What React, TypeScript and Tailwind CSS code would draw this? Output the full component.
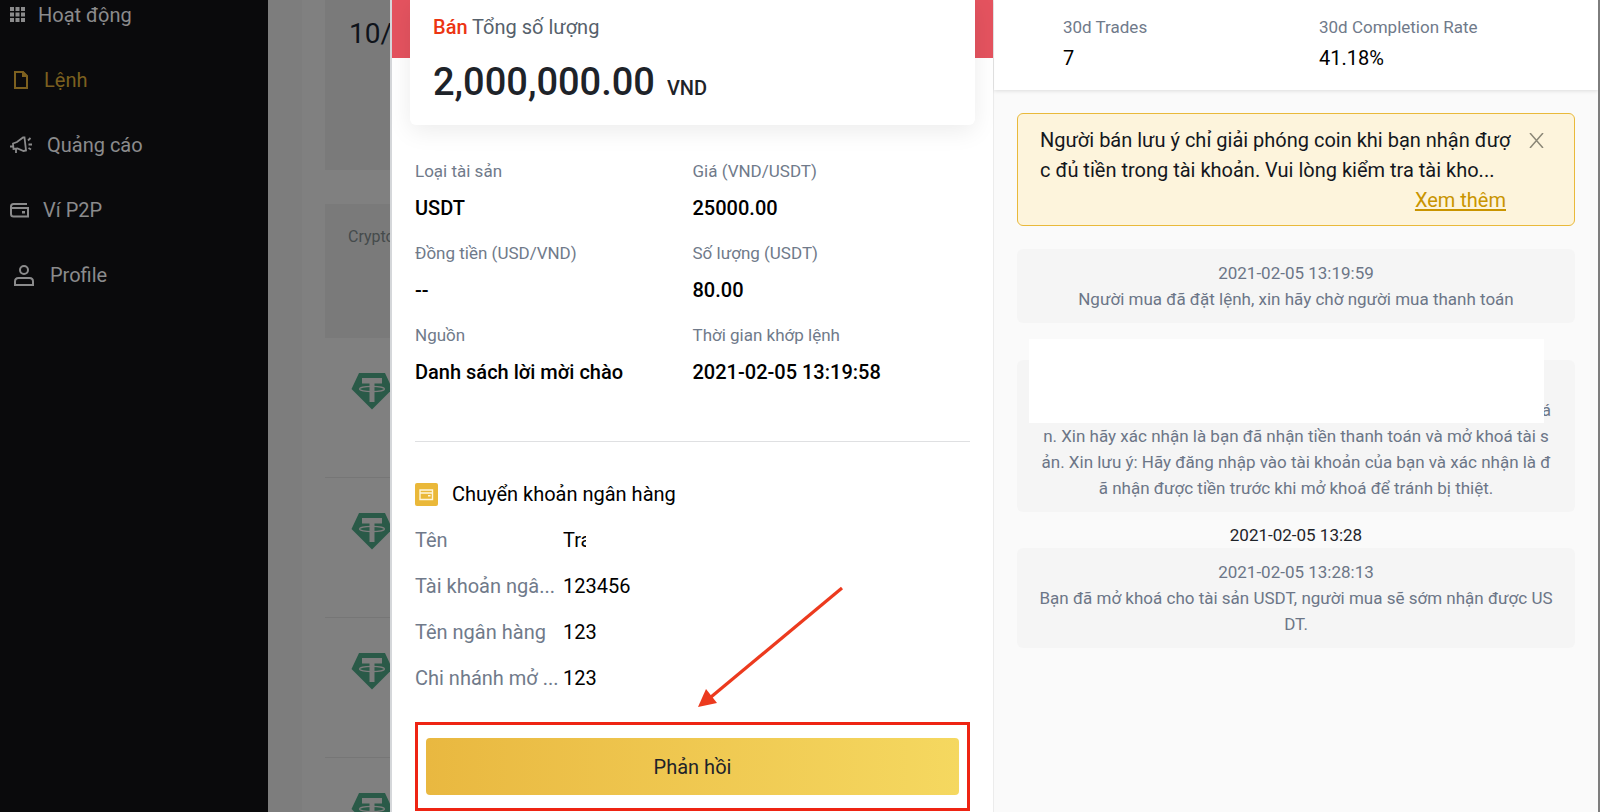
import type { ReactNode } from "react";

type NavItem = {
  label: string;
  icon: ReactNode;
  className: string;
};

const navItems: NavItem[] = [
  { label: "Hoạt động", icon: <GridIcon />, className: "gap-3" },
  { label: "Lệnh", icon: <FileIcon />, className: "gap-4 pl-1 text-[#7c601f]" },
  { label: "Quảng cáo", icon: <MegaphoneIcon />, className: "gap-[14px]" },
  { label: "Ví P2P", icon: <WalletIcon />, className: "gap-[14px]" },
  { label: "Profile", icon: <UserIcon />, className: "gap-4 pl-1" },
];

const details = [
  { label: "Loại tài sản", value: "USDT" },
  { label: "Giá (VND/USDT)", value: "25000.00" },
  { label: "Đồng tiền (USD/VND)", value: "--" },
  { label: "Số lượng (USDT)", value: "80.00" },
  { label: "Nguồn", value: "Danh sách lời mời chào" },
  { label: "Thời gian khớp lệnh", value: "2021-02-05 13:19:58" },
];

const bankRows = [
  { label: "Tài khoản ngâ...", value: "123456" },
  { label: "Tên ngân hàng", value: "123" },
  { label: "Chi nhánh mở ...", value: "123" },
];

function GridIcon() {
  return (
    <svg width="16" height="16" viewBox="0 0 16 16" fill="currentColor">
      {[0, 5.5, 11].map((y) => [0, 5.5, 11].map((x) => <rect key={`${x}-${y}`} x={x} y={y} width="4" height="4" />))}
    </svg>
  );
}

function FileIcon() {
  return (
    <svg width="14" height="20" viewBox="0 0 14 20" fill="none" stroke="currentColor" strokeWidth="2">
      <path d="M1 2h8l4 4v12H1z" />
      <path d="M8 1v6h5V5L9 1z" fill="currentColor" stroke="none" />
    </svg>
  );
}

function MegaphoneIcon() {
  return (
    <svg width="23" height="18" viewBox="0 0 23 18" fill="none" stroke="currentColor" strokeWidth="1.8">
      <path d="M3 7.5 7 6l6-4.5h1.500L16 14.500l-2.500.5-6-2.500-4 .5z" />
      <path d="M0 10.500h3M6 12.500V17M18 4.500l2.500-2.500M18.500 8.500H22M18.500 12l2.500 1.500" />
    </svg>
  );
}

function WalletIcon() {
  return (
    <svg width="19" height="15" viewBox="0 0 19 15" fill="none" stroke="currentColor" strokeWidth="2">
      <path d="M17 1H3.500C2 1 1 2 1 3.500v7.500C1 12.500 2 13.500 3.500 13.500H18V5H1.500" />
      <rect x="12" y="8" width="3" height="2.500" fill="currentColor" stroke="none" />
    </svg>
  );
}

function UserIcon() {
  return (
    <svg width="20" height="21" viewBox="0 0 20 21" fill="none" stroke="currentColor" strokeWidth="2">
      <circle cx="10" cy="5" r="4" />
      <path d="M1 20v-3.500C1 14.500 2.500 13 4.500 13h11c2 0 3.500 1.500 3.500 3.500V20z" />
    </svg>
  );
}

function TetherIcon() {
  return (
    <svg width="42" height="37" viewBox="0 0 42 37" className="shrink-0">
      <path d="M8 0h26l7.500 16L21 36.500.500 16z" fill="#2a5a48" />
      <path d="M11 5h20v5.500h-7.500V29h-5V10.500H11z" fill="#7d7d7d" />
      <ellipse cx="21" cy="16" rx="12.500" ry="2.600" fill="none" stroke="#7d7d7d" strokeWidth="1.200" />
    </svg>
  );
}

function CardIcon() {
  return (
    <svg width="23" height="23" viewBox="0 0 23 23" className="shrink-0">
      <rect width="23" height="23" rx="2" fill="#eab839" />
      <path d="M5 7h12.500v9.500H5zM5 10h12.500" fill="none" stroke="#fff6dc" strokeWidth="1.400" />
      <rect x="13" y="12" width="2.500" height="1.500" fill="#fff6dc" />
    </svg>
  );
}

function Sidebar() {
  return (
    <nav className="w-[268px] shrink-0 bg-[#0a0a0c] text-[#8b8b8c]">
      <ul className="flex flex-col gap-[35px] pl-[10px]">
        {navItems.map((item) => (
          <li key={item.label}>
            <a href="#" className={`flex items-center text-xl leading-[30px] ${item.className}`}>
              {item.icon}
              {item.label}
            </a>
          </li>
        ))}
      </ul>
    </nav>
  );
}

// Dimmed order list that stays visible behind the drawer
function OrderList() {
  return (
    <div className="flex w-[122px] shrink-0 overflow-hidden bg-[#808080]">
      <div className="w-[34px] shrink-0 bg-[#7d7d7d]" />
      <div className="ml-[23px] w-[300px] shrink-0">
        <div className="h-[170px] bg-[#7a7a7a] pt-[14px] pl-6 text-[28px] leading-10 text-[#0f131a]">10/</div>
        <div className="mt-[34px] h-[134px] bg-[#7a7a7a] pt-5 pl-[23px] text-base leading-[26px] text-[#454b4c]">Crypto</div>
        {[0, 1, 2, 3].map((row) => (
          <div key={row} className="h-[140px] border-b border-[#767676] pt-[35px] pl-[26px]">
            <TetherIcon />
          </div>
        ))}
      </div>
    </div>
  );
}

function OrderPanel() {
  return (
    <section className="relative bg-white">
      <div className="absolute inset-x-0 top-0 h-[58px] bg-[#e4535f]" />
      <div className="relative mx-[18px] h-[125px] rounded-b-md bg-white px-[23px] pt-3 shadow-[0_6px_24px_rgba(0,0,0,0.08)]">
        <p className="text-xl leading-[30px] text-[#56616b]">
          <span className="font-medium text-[#ec3512]">Bán</span> Tổng số lượng
        </p>
        <p className="mt-3 leading-[56px] font-medium text-[#1e2329]">
          <span className="text-[38px]">2,000,000.00</span> <span className="ml-2 text-xl">VND</span>
        </p>
      </div>

      <div className="px-[23px] pt-[33px]">
        <dl className="grid grid-cols-2 gap-y-4 border-b border-[#dfe0e2] pb-[53px]">
          {details.map((item) => (
            <div key={item.label}>
              <dt className="text-[17px] leading-[26px] text-[#707a8a]">{item.label}</dt>
              <dd className="mt-2 text-xl leading-8 font-medium text-black">{item.value}</dd>
            </div>
          ))}
        </dl>

        <h2 className="mt-[37px] flex items-center gap-[14px] text-xl leading-[30px] text-black">
          <CardIcon />
          Chuyển khoản ngân hàng
        </h2>
        <dl className="mt-4 flex flex-col gap-4 text-xl leading-[30px]">
          <div className="flex">
            <dt className="w-[148px] shrink-0 text-[#707a8a]">Tên</dt>
            <dd className="w-[23px] overflow-hidden text-black">Tra</dd>
          </div>
          {bankRows.map((row) => (
            <div key={row.label} className="flex">
              <dt className="w-[148px] shrink-0 whitespace-nowrap text-[#707a8a]">{row.label}</dt>
              <dd className="text-black">{row.value}</dd>
            </div>
          ))}
        </dl>

        <div className="relative mt-[29px] border-[3px] border-[#ee2413] px-2 py-[13px]">
          <svg width="146" height="122" viewBox="0 0 146 122" className="absolute bottom-[100px] left-[280px]">
            <path d="M144 2 13 111" stroke="#ec3a1e" strokeWidth="3.200" fill="none" />
            <path d="M0 121 8 103l11 14z" fill="#ec3a1e" />
          </svg>
          <button
            type="button"
            className="h-[57px] w-full rounded bg-linear-to-r from-[#e9b840] to-[#f5d860] text-xl text-[#1e2329]"
          >
            Phản hồi
          </button>
        </div>
      </div>
    </section>
  );
}

function SystemMessage({ lines, children }: { lines: string[]; children?: ReactNode }) {
  return (
    <div className="relative rounded-md bg-[#f5f5f5] py-[11px] text-center text-[17px] leading-[26px] whitespace-nowrap text-[#6c7687]">
      {children}
      {lines.map((line) => (
        <p key={line}>{line}</p>
      ))}
    </div>
  );
}

function ChatPanel() {
  return (
    <section className="border-l border-[#ececec] bg-[#fafafa]">
      <header className="h-[90px] bg-white pl-[69px] shadow-[0_1px_4px_rgba(0,0,0,0.12)]">
        <dl className="grid grid-cols-[256px_1fr] pt-[14px]">
          <div>
            <dt className="text-[17px] leading-[26px] text-[#707a8a]">30d Trades</dt>
            <dd className="mt-1 text-xl leading-[28px] text-black">7</dd>
          </div>
          <div>
            <dt className="text-[17px] leading-[26px] text-[#707a8a]">30d Completion Rate</dt>
            <dd className="mt-1 text-xl leading-[28px] text-black">41.18%</dd>
          </div>
        </dl>
      </header>

      <div className="px-[23px] pt-[23px]">
        <div className="flex h-[113px] items-start rounded-md border border-[#e9b93a] bg-[#fdf4dc] pt-[11px] pl-[22px]">
          <div className="w-[466px] text-xl leading-[30px] whitespace-nowrap text-[#14171c]">
            <p>Người bán lưu ý chỉ giải phóng coin khi bạn nhận đượ</p>
            <p>c đủ tiền trong tài khoản. Vui lòng kiểm tra tài kho...</p>
            <p className="text-right">
              <a href="#" className="text-[#c99400] underline underline-offset-2">
                Xem thêm
              </a>
            </p>
          </div>
          <button type="button" aria-label="Close" className="mt-2 ml-[23px] text-[#8b8777]">
            <svg width="15" height="15" viewBox="0 0 15 15" fill="none" stroke="currentColor" strokeWidth="1.500">
              <path d="M1 0l13 15M14 0 1 15" />
            </svg>
          </button>
        </div>

        <div className="mt-[23px]">
          <SystemMessage lines={["2021-02-05 13:19:59", "Người mua đã đặt lệnh, xin hãy chờ người mua thanh toán"]} />
        </div>
        <div className="mt-[37px]">
          <SystemMessage
            lines={[
              "n. Xin hãy xác nhận là bạn đã nhận tiền thanh toán và mở khoá tài s",
              "ản. Xin lưu ý: Hãy đăng nhập vào tài khoản của bạn và xác nhận là đ",
              "ã nhận được tiền trước khi mở khoá để tránh bị thiệt.",
            ]}
          >
            <p className="pt-[26px] pr-6 text-right">á</p>
            <div className="absolute right-[31px] bottom-[89px] left-3 h-[84px] bg-white" />
          </SystemMessage>
        </div>
        <p className="mt-[10px] text-center text-[17px] leading-[26px] text-[#1e2329]">2021-02-05 13:28</p>
        <SystemMessage
          lines={["2021-02-05 13:28:13", "Bạn đã mở khoá cho tài sản USDT, người mua sẽ sớm nhận được US", "DT."]}
        />
      </div>
    </section>
  );
}

export default function App() {
  return (
    <div className="flex h-screen overflow-hidden bg-[#808080] font-['Roboto',sans-serif]">
      <Sidebar />
      <OrderList />
      <main className="grid min-w-0 flex-1 grid-cols-[601fr_605fr] border-l-2 border-[#d5d7da]">
        <OrderPanel />
        <ChatPanel />
      </main>
      <div className="w-[2px] shrink-0 bg-[#7d7d7d]" />
    </div>
  );
}
